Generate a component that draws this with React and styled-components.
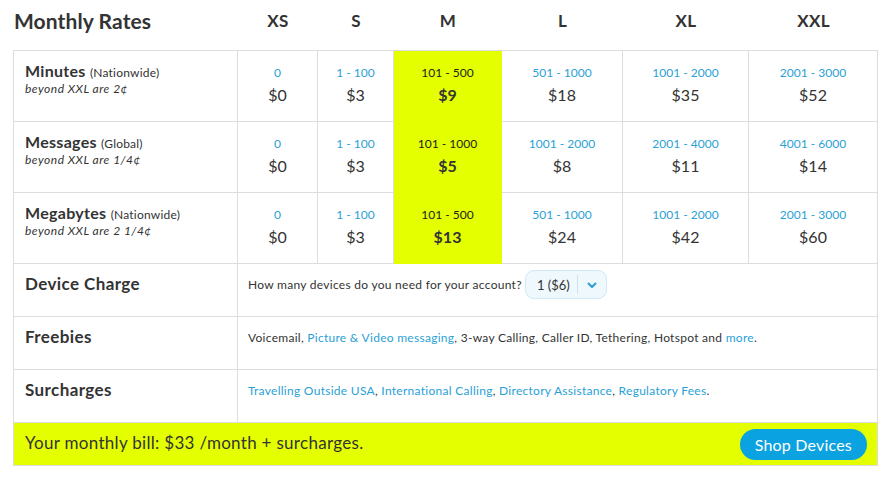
import React from 'react'
import styled, { createGlobalStyle } from 'styled-components'

const GlobalStyle = createGlobalStyle`
  body {
    margin: 0;
    background: #fff;
    font-family: Lato, 'Open Sans', sans-serif;
    color: #333;
  }
`

const cols = '224px 80px 76px 108px 121px 126px 129px'
const YELLOW = '#e4ff00'
const BLUE = '#2a9fd6'

const Page = styled.div`
  padding: 0 13px;
  width: 865px;
`

const HeadRow = styled.div`
  display: grid;
  grid-template-columns: ${cols};
  height: 50px;
  align-items: center;
  padding-left: 1px;
`

const Title = styled.h1`
  margin: 0 0 9px 0;
  font-size: 21px;
  font-weight: 700;
  color: #333;
  letter-spacing: 0.1px;
`

const SizeHead = styled.div`
  text-align: center;
  font-size: 17px;
  font-weight: 700;
  letter-spacing: 0.3px;
  margin-bottom: 9px;
`

const Table = styled.div`
  display: grid;
  grid-template-columns: ${cols};
  border-left: 1px solid #ddd;
  border-top: 1px solid #ddd;
`

const Cell = styled.div`
  box-sizing: border-box;
  height: ${(p) => p.$h || 71}px;
  border-right: 1px solid ${(p) => (p.$hot ? YELLOW : '#ddd')};
  border-bottom: 1px solid ${(p) => (p.$hot ? YELLOW : '#ddd')};
  background: ${(p) => (p.$hot ? YELLOW : '#fff')};
  grid-column: ${(p) => p.$span || 'auto'};
`

const LabelCell = styled(Cell)`
  padding: 10px 11px 0;
`

const Label = styled.div`
  font-size: ${(p) => (p.$big ? 17 : 16)}px;
  font-weight: 700;
  letter-spacing: ${(p) => (p.$big ? 0.4 : 0.3)}px;
  color: #333;
  line-height: 19px;

  small {
    font-size: 12px;
    font-weight: 400;
    letter-spacing: 0.2px;
  }
`

const Note = styled.div`
  font-size: 12px;
  font-style: italic;
  letter-spacing: 0.5px;
  line-height: 14px;
`

const ValueCell = styled(Cell)`
  display: flex;
  flex-direction: column;
  align-items: center;
  padding-top: 15px;
`

const Range = styled.div`
  font-size: 12px;
  line-height: 14px;
  color: ${(p) => (p.$hot ? '#222' : BLUE)};
`

const Price = styled.div`
  font-size: 16px;
  line-height: 20px;
  margin-top: 5px;
  font-weight: ${(p) => (p.$hot ? 700 : 400)};
  color: #333;
`

const TextCell = styled(Cell)`
  display: flex;
  align-items: center;
  align-self: stretch;
  padding: 0 0 11px 10px;
  font-size: 12px;
  letter-spacing: 0.28px;
  color: #333;
  gap: 3px;
`

const Link = styled.a`
  color: ${BLUE};
  text-decoration: none;
`

const Select = styled.div`
  display: flex;
  align-items: center;
  box-sizing: border-box;
  width: 82px;
  height: 29px;
  border: 1px solid #cfe9f6;
  border-radius: 9px;
  background: #eef8fd;
  font-size: 13px;
  letter-spacing: 0;
  color: #333;

  span {
    flex: 1;
    text-align: center;
    padding-left: 4px;
  }

  i {
    display: flex;
    align-items: center;
    justify-content: center;
    width: 28px;
    height: 19px;
    border-left: 1px solid #cfe2ec;
  }
`

const Footer = styled.div`
  display: flex;
  align-items: center;
  justify-content: space-between;
  box-sizing: border-box;
  height: 43px;
  padding: 0 10px 3px 11px;
  background: ${YELLOW};
  border: 1px solid #ddd;
  border-top: none;
  font-size: 17px;
  letter-spacing: 0.3px;
  color: #333;
`

const ShopButton = styled.button`
  height: 31px;
  margin-top: 3px;
  padding: 0 15px;
  border: none;
  border-radius: 16px;
  background: #0aa2e0;
  color: #fff;
  font-family: inherit;
  font-size: 16px;
  letter-spacing: 0.2px;
  cursor: pointer;
`

const sizes = ['XS', 'S', 'M', 'L', 'XL', 'XXL']

const rates = [
  {
    name: 'Minutes',
    scope: 'Nationwide',
    note: 'beyond XXL are 2¢',
    cells: [
      ['0', '$0'], ['1 - 100', '$3'], ['101 - 500', '$9'],
      ['501 - 1000', '$18'], ['1001 - 2000', '$35'], ['2001 - 3000', '$52'],
    ],
  },
  {
    name: 'Messages',
    scope: 'Global',
    note: 'beyond XXL are 1/4¢',
    cells: [
      ['0', '$0'], ['1 - 100', '$3'], ['101 - 1000', '$5'],
      ['1001 - 2000', '$8'], ['2001 - 4000', '$11'], ['4001 - 6000', '$14'],
    ],
  },
  {
    name: 'Megabytes',
    scope: 'Nationwide',
    note: 'beyond XXL are 2 1/4¢',
    cells: [
      ['0', '$0'], ['1 - 100', '$3'], ['101 - 500', '$13'],
      ['501 - 1000', '$24'], ['1001 - 2000', '$42'], ['2001 - 3000', '$60'],
    ],
  },
]

function Chevron() {
  return (
    <svg width="12" height="12" viewBox="0 0 24 24" fill="none" stroke={BLUE} strokeWidth="4" strokeLinecap="round" strokeLinejoin="round">
      <path d="M5 9l7 7 7-7" />
    </svg>
  )
}

export default function App() {
  return (
    <Page>
      <GlobalStyle />
      <HeadRow>
        <Title>Monthly Rates</Title>
        {sizes.map((s) => (
          <SizeHead key={s}>{s}</SizeHead>
        ))}
      </HeadRow>

      <Table>
        {rates.map((r) => (
          <React.Fragment key={r.name}>
            <LabelCell>
              <Label>
                {r.name} <small>({r.scope})</small>
              </Label>
              <Note>{r.note}</Note>
            </LabelCell>
            {r.cells.map(([range, price], i) => (
              <ValueCell key={i} $hot={i === 2}>
                <Range $hot={i === 2}>{range}</Range>
                <Price $hot={i === 2}>{price}</Price>
              </ValueCell>
            ))}
          </React.Fragment>
        ))}

        <LabelCell $h={53}>
          <Label $big>Device Charge</Label>
        </LabelCell>
        <TextCell $h={53} $span="span 6">
          How many devices do you need for your account?
          <Select>
            <span>1 ($6)</span>
            <i><Chevron /></i>
          </Select>
        </TextCell>

        <LabelCell $h={53}>
          <Label $big>Freebies</Label>
        </LabelCell>
        <TextCell $h={53} $span="span 6">
          <span>
            Voicemail, <Link href="#">Picture &amp; Video messaging</Link>, 3-way Calling, Caller ID,
            Tethering, Hotspot and <Link href="#">more</Link>.
          </span>
        </TextCell>

        <LabelCell $h={53}>
          <Label $big>Surcharges</Label>
        </LabelCell>
        <TextCell $h={53} $span="span 6">
          <span>
            <Link href="#">Travelling Outside USA</Link>, <Link href="#">International Calling</Link>,{' '}
            <Link href="#">Directory Assistance</Link>, <Link href="#">Regulatory Fees</Link>.
          </span>
        </TextCell>
      </Table>

      <Footer>
        Your monthly bill: $33 /month + surcharges.
        <ShopButton>Shop Devices</ShopButton>
      </Footer>
    </Page>
  )
}
